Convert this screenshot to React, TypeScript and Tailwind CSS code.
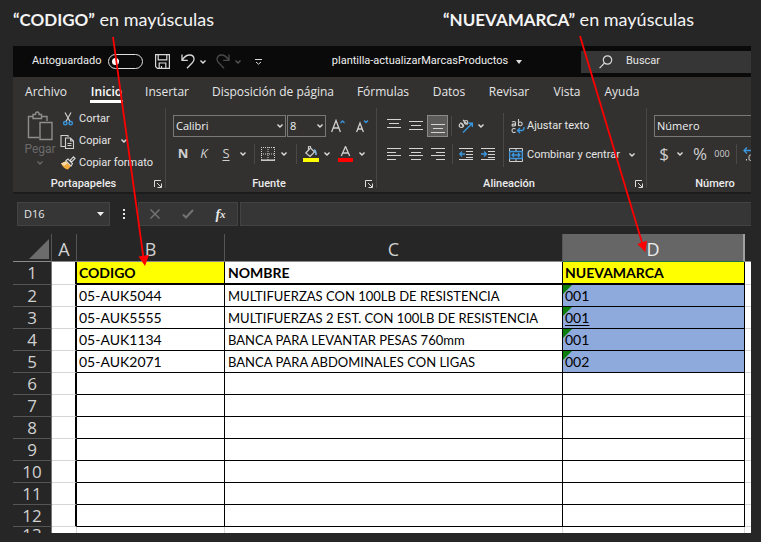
import type { ReactNode } from "react";

const UI = "font-['Open_Sans','Noto_Sans',sans-serif]";
const SMALL = "font-['Roboto','Open_Sans',sans-serif]";
const CELL = "font-['Lato','Liberation_Sans',sans-serif]";

function Chevron({ className = "text-[#e0e0e0]" }: { className?: string }) {
  return (
    <svg width="6" height="4" viewBox="0 0 6 4" fill="none" stroke="currentColor" strokeWidth="1.4" className={className}>
      <path d="M0.5 0.5 3 3l2.5-2.5" />
    </svg>
  );
}

function Tool({ label, className, children }: { label: string; className: string; children: ReactNode }) {
  return (
    <button type="button" aria-label={label} className={`flex h-[22px] shrink-0 items-center justify-center ${className}`}>
      {children}
    </button>
  );
}

function Divider({ className = "h-5 w-[10px]" }: { className?: string }) {
  return (
    <div className={`flex shrink-0 justify-center ${className}`}>
      <div className="w-px bg-[#4a4948]" />
    </div>
  );
}

function Group({ title, className, launcher = true, children }: { title: string; className: string; launcher?: boolean; children: ReactNode }) {
  return (
    <section aria-label={title} className={`flex h-[80px] shrink-0 flex-col border-r border-[#484746] ${className}`}>
      <div className="h-[72px] shrink-0">{children}</div>
      <div className="flex h-2 shrink-0 items-center">
        <div className={`flex-1 text-center text-[11px] font-medium leading-4 text-[#ececec] ${SMALL}`}>{title}</div>
        <button type="button" aria-label={`Opciones de ${title}`} className="flex w-[11px] justify-start">
          {launcher && (
            <svg width="8" height="8" viewBox="0 0 8 8" fill="none" stroke="#dcdcdc">
              <path d="M0.5 7V0.5H7M3 3l4 4M7.5 3.5v4h-4" />
            </svg>
          )}
        </button>
      </div>
    </section>
  );
}

function Lines({ rows }: { rows: [number, number, number][] }) {
  return (
    <svg width="14" height="14" viewBox="0 0 14 14" stroke="#d4d4d4" strokeWidth="1">
      {rows.map(([x, y, w]) => (
        <path key={y} d={`M${x} ${y + 0.5}h${w}`} />
      ))}
    </svg>
  );
}

function Indent({ right = false }: { right?: boolean }) {
  return (
    <svg width="14" height="14" viewBox="0 0 14 14" fill="none" stroke="#d4d4d4">
      <path d="M0 1.5h14M7 4.5h7M7 7.5h7M7 10.5h7M0 12.5h14" />
      <path stroke="#3a96dd" strokeWidth="1.3" d={right ? "M0 7h5M3 4.5 5.5 7 3 9.5" : "M1 7h5M3 4.5.8 7 3 9.5"} />
    </svg>
  );
}

function TitleBar() {
  return (
    <header className={`flex h-[31px] items-center bg-[#0a0a0a] pl-[19px] text-[11px] text-[#f0f0f0] ${SMALL}`}>
      <label htmlFor="autosave" className="w-[76px] shrink-0 whitespace-nowrap">Autoguardado</label>
      <input
        id="autosave"
        type="checkbox"
        role="switch"
        className="h-[15px] w-[35px] shrink-0 appearance-none rounded-full border border-[#e0e0e0] before:ml-[3px] before:mt-[3px] before:block before:size-[7px] before:rounded-full before:bg-white"
      />
      <Tool label="Guardar" className="ml-[10px] w-[18px]">
        <svg width="15" height="15" viewBox="0 0 15 15" fill="none" stroke="#d8d8d8" strokeWidth="1.2">
          <path d="M0.6 0.6h13.8v13.8H2.4L.6 12.6zM3.2.6v5.2h8.6V.6M4.2 14.4V9h6.6v5.4M6.5 12v2.4" />
        </svg>
      </Tool>
      <Tool label="Deshacer" className="ml-[8px] w-[18px]">
        <svg width="14" height="15" viewBox="0 0 14 15" fill="none" stroke="#d8d8d8" strokeWidth="1.3">
          <path d="M1 .5v5.8h5.8M1.3 6C3.2 2.800 5.800 1 8.700 1c2.600 0 4.300 1.900 4.300 4.200 0 1.500-.7 2.600-1.700 3.600L6 14.300" />
        </svg>
      </Tool>
      <Tool label="Opciones de deshacer" className="w-[12px]"><Chevron /></Tool>
      <Tool label="Rehacer" className="ml-[5px] w-[18px]">
        <svg width="14" height="15" viewBox="0 0 14 15" fill="none" stroke="#4a4a4a" strokeWidth="1.300">
          <path d="M13 .5v5.800H7.200M12.700 6C10.800 2.800 8.200 1 5.300 1 2.700 1 1 2.900 1 5.200c0 1.500.7 2.600 1.700 3.600L8 14.300" />
        </svg>
      </Tool>
      <Tool label="Opciones de rehacer" className="w-[12px]"><Chevron className="text-[#555]" /></Tool>
      <Tool label="Personalizar barra" className="ml-[7px] w-[14px]">
        <svg width="7" height="6" viewBox="0 0 7 6" fill="none" stroke="#d8d8d8"><path d="M0 .5h7M1 3l2.500 2.200L6 3" /></svg>
      </Tool>
      <div className="flex flex-1 justify-center pl-2">
        <button type="button" className="flex items-center gap-2 whitespace-nowrap">
          plantilla-actualizarMarcasProductos
          <svg width="6" height="4" viewBox="0 0 6 4" fill="#e0e0e0"><path d="M0 0h6L3 4z" /></svg>
        </button>
      </div>
      <label className="flex h-[22px] w-[170px] shrink-0 items-center gap-[13px] bg-[#363636] pl-[18px]">
        <svg width="14" height="14" viewBox="0 0 14 14" fill="none" stroke="#d8d8d8" strokeWidth="1.200">
          <circle cx="8.500" cy="5" r="4.200" /><path d="M5.500 8 .6 13.200" />
        </svg>
        <input aria-label="Buscar" placeholder="Buscar" className="w-24 bg-transparent placeholder:text-[#e6e6e6]" />
      </label>
    </header>
  );
}

const tabs = [
  { name: "Archivo", w: "w-[66px]" },
  { name: "Inicio", w: "w-[55px]" },
  { name: "Insertar", w: "w-[66px]" },
  { name: "Disposición de página", w: "w-[146px]" },
  { name: "Fórmulas", w: "w-[74px]" },
  { name: "Datos", w: "w-[58px]" },
  { name: "Revisar", w: "w-[62px]" },
  { name: "Vista", w: "w-[54px]" },
  { name: "Ayuda", w: "w-[56px]" },
];

function Tabs() {
  return (
    <nav className="flex h-[31px] text-[12px] leading-4 text-[#e6e6e6]">
      {tabs.map((t) => (
        <button key={t.name} type="button" className={`flex h-[26px] shrink-0 items-end justify-center whitespace-nowrap ${t.w}`}>
          <span className={t.name === "Inicio" ? "border-b-[3px] border-white px-px font-semibold text-white" : "pb-[3px]"}>{t.name}</span>
        </button>
      ))}
    </nav>
  );
}

function Clipboard() {
  return (
    <Group title="Portapapeles" className="w-[153px]">
      <div className={`flex ${SMALL}`}>
        <button type="button" className="ml-[10px] flex w-[34px] flex-col items-center pt-[3px] text-[12px] leading-4 text-[#6a6968]">
          <svg width="26" height="30" viewBox="0 0 26 30" fill="none" stroke="#8e8d8c" strokeWidth="1.400">
            <path d="M12 26.500H1.500v-21H6M14.500 5.500H20V10M6 7.500v-4h2.500C8.500 1.500 9 1 10.300 1s1.800.5 1.800 2.500h2.400v4z" />
            <path d="M13 11.500h12v17H13z" />
          </svg>
          Pegar
          <span className="flex pt-1"><Chevron className="text-[#6a6968]" /></span>
        </button>
        <div className="ml-[3px] flex flex-col text-[11px] text-[#e6e6e6]">
          <button type="button" className="flex h-[22px] items-center whitespace-nowrap">
            <svg width="19" height="14" viewBox="0 0 19 14" fill="none" stroke="#cfcfcf" strokeWidth="1.200">
              <path d="M5 .5l5 9M11 .5l-5 9" />
              <g stroke="#3a96dd" strokeWidth="1.400"><circle cx="5.300" cy="11.200" r="1.700" /><circle cx="10.700" cy="11.200" r="1.700" /></g>
            </svg>
            Cortar
          </button>
          <button type="button" className="flex h-[22px] items-center whitespace-nowrap">
            <svg width="19" height="15" viewBox="0 0 19 15" fill="none" stroke="#cfcfcf" strokeWidth="1.100">
              <path d="M5 12.500H1v-11h7V3M5.500 4h5l3 3v7.500h-8zM10.500 4v3h3M7.500 9.500h4M7.500 11.500h4" />
            </svg>
            Copiar
            <span className="pl-[10px]"><Chevron /></span>
          </button>
          <button type="button" className="flex h-[22px] items-center whitespace-nowrap">
            <svg width="19" height="14" viewBox="0 0 19 14" fill="none">
              <path d="M1 7.500 6 5l5 5-3 3.500C5 13 3 11.500 1 7.500z" fill="#f2a93b" />
              <path d="M1 7.500 5.500 5.500l2 2-3.500 2.200z" fill="#f7ddb0" />
              <path d="M6 4.500 8 3l4.500 4.500L11 10z" fill="#323130" stroke="#d8d8d8" strokeWidth="1.100" />
              <path d="m10 4.500 3.500-3.700 1.600 1.600L11.600 6z" stroke="#d8d8d8" strokeWidth="1.100" />
            </svg>
            Copiar formato
          </button>
        </div>
      </div>
    </Group>
  );
}

function Combo({ label, value, className }: { label: string; value: string; className: string }) {
  return (
    <div className={`flex h-[22px] shrink-0 items-center border border-[#797876] bg-[#323130] pr-[2px] ${className}`}>
      <select aria-label={label} className="min-w-0 flex-1 appearance-none bg-transparent pl-[2px] text-[11px] leading-5 text-[#f0f0f0]">
        <option>{value}</option>
      </select>
      <Chevron />
    </div>
  );
}

function FontGroup() {
  return (
    <Group title="Fuente" className="w-[211px] pl-[7px]">
      <div className="flex items-center pt-[7px]">
        <Combo label="Fuente" value="Calibri" className="mr-px w-[113px]" />
        <Combo label="Tamaño" value="8" className="w-[39px]" />
        <Tool label="Aumentar fuente" className="w-[24px]">
          <svg width="14" height="14" viewBox="0 0 14 14" fill="none" stroke="#cfcfcf" strokeWidth="1.300">
            <path d="M.6 13 5 1.500 9.400 13M2.200 9h5.600" /><path stroke="#3a96dd" d="m9.500 4 2-2 2 2" />
          </svg>
        </Tool>
        <Tool label="Reducir fuente" className="w-[23px]">
          <svg width="14" height="14" viewBox="0 0 14 14" fill="none" stroke="#cfcfcf" strokeWidth="1.300">
            <path d="M1.600 13 5 4l3.400 9M2.800 10h4.400" /><path stroke="#3a96dd" d="m9 1.500 2 2 2-2" />
          </svg>
        </Tool>
      </div>
      <div className="flex items-center pt-[6px] text-[13px] text-[#d0d0d0]">
        <Tool label="Negrita" className="w-[20px] font-bold">N</Tool>
        <Tool label="Cursiva" className="w-[22px] italic">K</Tool>
        <Tool label="Subrayado" className="w-[22px] underline underline-offset-2">S</Tool>
        <Tool label="Opciones de subrayado" className="w-[12px]"><Chevron /></Tool>
        <Divider />
        <Tool label="Bordes" className="w-[18px]">
          <svg width="14" height="14" viewBox="0 0 14 14" fill="none" stroke="#cfcfcf">
            <path strokeDasharray="1 1" d="M0 .5h14M.5 0v13M13.500 0v13M7 0v13M0 7h14" /><path strokeWidth="1.500" d="M0 13.200h14" />
          </svg>
        </Tool>
        <Tool label="Opciones de bordes" className="w-[14px]"><Chevron /></Tool>
        <Divider />
        <Tool label="Color de relleno" className="w-[20px]">
          <svg width="16" height="16" viewBox="0 0 16 16" fill="none" stroke="#cfcfcf" strokeWidth="1.200">
            <path d="M7 2.500 2.800 7 7 10.500 11.500 6 7.500 2V.5C7.500 0 5.500 0 5.500 1v3" />
            <path d="M11 4c1.500 0 2 1.500 2 5" stroke="#7db9e8" strokeWidth="1.600" /><path d="M0 12h16v4H0z" fill="#ffff00" stroke="none" />
          </svg>
        </Tool>
        <Tool label="Opciones de relleno" className="w-[12px]"><Chevron /></Tool>
        <Tool label="Color de fuente" className="w-[24px]">
          <svg width="15" height="16" viewBox="0 0 15 16" fill="none" stroke="#cfcfcf" strokeWidth="1.300">
            <path d="M3.300 10 7.500.5l4.200 9.500M4.800 7h5.400" /><path d="M0 12h15v4H0z" fill="#ff0000" stroke="none" />
          </svg>
        </Tool>
        <Tool label="Opciones de color" className="w-[10px]"><Chevron /></Tool>
      </div>
    </Group>
  );
}

function AlignGroup() {
  return (
    <Group title="Alineación" className="w-[270px] pl-[6px]">
      <div className="flex">
        <div className="w-[117px] shrink-0 pt-[7px]">
          <div className="flex items-center">
            <Tool label="Alinear arriba" className="w-[22px]"><Lines rows={[[0, 0, 14], [2, 4, 10], [0, 8, 14]]} /></Tool>
            <Tool label="Alinear al medio" className="w-[22px]"><Lines rows={[[0, 2, 14], [2, 6, 10], [0, 10, 14]]} /></Tool>
            <Tool label="Alinear abajo" className="w-[21px] border border-[#8a8988] bg-[#5c5b5a]"><Lines rows={[[0, 5, 14], [2, 9, 10], [0, 13, 14]]} /></Tool>
            <Divider className="h-5 w-[7px]" />
            <Tool label="Orientación" className="w-[22px]">
              <svg width="16" height="14" viewBox="0 0 16 14" fill="none" stroke="#cfcfcf" strokeWidth="1.200">
                <circle cx="3.200" cy="6.500" r="2" /><path d="M2.500 3.500 6 7.500M5 1l4.500 4.500" /><circle cx="8" cy="3.300" r="1.800" />
                <path stroke="#3a96dd" strokeWidth="1.400" d="m5 13.500 9-9M10.500 4.200h3.800V8" />
              </svg>
            </Tool>
            <Tool label="Opciones de orientación" className="w-[8px]"><Chevron /></Tool>
          </div>
          <div className="flex items-center pt-[6px]">
            <Tool label="Alinear a la izquierda" className="w-[22px]"><Lines rows={[[0, 1, 14], [0, 5, 9], [0, 8, 14], [0, 12, 9]]} /></Tool>
            <Tool label="Centrar" className="w-[22px]"><Lines rows={[[0, 1, 14], [2, 5, 10], [0, 8, 14], [2, 12, 10]]} /></Tool>
            <Tool label="Alinear a la derecha" className="w-[22px]"><Lines rows={[[0, 1, 14], [5, 5, 9], [0, 8, 14], [5, 12, 9]]} /></Tool>
            <Divider className="h-5 w-[6px]" />
            <Tool label="Disminuir sangría" className="w-[22px]"><Indent /></Tool>
            <Tool label="Aumentar sangría" className="w-[22px]"><Indent right /></Tool>
          </div>
        </div>
        <div className="flex pt-[5px]"><Divider className="h-[54px] w-[6px]" /></div>
        <div className={`flex flex-col pl-[3px] pt-[7px] text-[11px] text-[#e6e6e6] ${SMALL}`}>
          <button type="button" className="flex h-[22px] items-center whitespace-nowrap">
            <span className="flex w-[18px] justify-center">
              <svg width="14" height="15" viewBox="0 0 14 15" fill="none" stroke="#cfcfcf" strokeWidth="1.100">
                <path d="M1 3.200c1-1 3.500-1 3.500.6V7M4.500 5C2.500 5 1 5 1 6.200 1 7.500 4 7.300 4.500 6M7.500 0v7M7.500 4c.5-1.500 3.700-1.500 3.700.8s-3.200 2.500-3.700.8M4.500 10c-1.200-1-3.500-.6-3.500 1.500s2.300 2.500 3.500 1.500" />
                <path stroke="#3a96dd" strokeWidth="1.400" d="M13 8c.3 2.500-.8 3.500-3 3.500H6.500M9 9l-2.500 2.500L9 14" />
              </svg>
            </span>
            Ajustar texto
          </button>
          <button type="button" className="mt-[7px] flex h-[22px] items-center whitespace-nowrap">
            <span className="flex w-[18px] justify-start">
              <svg width="14" height="14" viewBox="0 0 14 14" fill="none" stroke="#cfcfcf">
                <path d="M.5.500h13v13H.5zM7 .5V3M7 11v2.500" /><path stroke="#3a96dd" strokeWidth="1.300" d="M.7 3.500h12.600v7H.7zM3 7h8M5 5 3 7l2 2M9 5l2 2-2 2" />
              </svg>
            </span>
            Combinar y centrar
            <span className="pl-[9px]"><Chevron /></span>
          </button>
        </div>
      </div>
    </Group>
  );
}

function NumberGroup() {
  return (
    <Group title="Número" className="w-[141px] pl-[7px]" launcher={false}>
      <div className="pt-[7px]"><Combo label="Formato de número" value="Número" className="w-[120px]" /></div>
      <div className="flex items-center pt-[6px] text-[#cfcfcf]">
        <Tool label="Formato de contabilidad" className="w-[20px] text-[17px]">$</Tool>
        <Tool label="Opciones de moneda" className="w-[12px]"><Chevron /></Tool>
        <Tool label="Porcentaje" className="w-[28px] text-[17px]">%</Tool>
        <Tool label="Millares" className="w-[16px] text-[9px]">000</Tool>
        <Divider className="h-5 w-[12px]" />
        <Tool label="Aumentar decimales" className="w-[18px]">
          <svg width="16" height="14" viewBox="0 0 16 14" fill="none" stroke="#cfcfcf">
            <path stroke="#3a96dd" strokeWidth="1.400" d="M1 3.500h8M4 .5l-3 3 3 3" /><path d="M3.500 12v1.500" /><rect x="6" y="8" width="3.500" height="5.500" rx="1.600" />
          </svg>
        </Tool>
      </div>
    </Group>
  );
}

function FormulaBar() {
  const box = "border border-[#434343] bg-[#363636]";
  return (
    <div className="flex h-[42px] items-center border-t-2 border-[#1c1c1c] bg-[#262626] pl-1 text-[#e6e6e6]">
      <div className={`flex h-6 w-[93px] shrink-0 items-center pl-[6px] pr-[5px] ${box}`}>
        <input aria-label="Cuadro de nombres" defaultValue="D16" className="w-16 min-w-0 flex-1 bg-transparent text-[11px]" />
        <button type="button" aria-label="Elegir nombre">
          <svg width="7" height="4" viewBox="0 0 7 4" fill="#f0f0f0"><path d="M0 0h7L3.500 4z" /></svg>
        </button>
      </div>
      <div className="flex w-7 shrink-0 justify-center">
        <svg width="2" height="10" viewBox="0 0 2 10" fill="#e6e6e6"><path d="M0 0h2v2H0zM0 4h2v2H0zM0 8h2v2H0z" /></svg>
      </div>
      <div className={`flex h-6 w-[100px] shrink-0 items-center ${box}`}>
        <Tool label="Cancelar" className="w-[32px]">
          <svg width="10" height="10" viewBox="0 0 10 10" stroke="#737373" strokeWidth="1.500"><path d="m.5.500 9 9M9.500.500l-9 9" /></svg>
        </Tool>
        <Tool label="Introducir" className="w-[33px]">
          <svg width="12" height="10" viewBox="0 0 12 10" fill="none" stroke="#737373" strokeWidth="2"><path d="m1 5.500 3 3L11 1" /></svg>
        </Tool>
        <Tool label="Insertar función" className="w-[33px] font-['Liberation_Serif',serif] text-[14px] font-bold italic">
          f<span className="text-[11px]">x</span>
        </Tool>
      </div>
      <input aria-label="Barra de fórmulas" className={`ml-[2px] h-6 min-w-0 flex-1 border-r-0 ${box}`} />
    </div>
  );
}

const rows = [
  ["05-AUK5044", "MULTIFUERZAS CON 100LB DE RESISTENCIA", "001"],
  ["05-AUK5555", "MULTIFUERZAS 2 EST. CON 100LB DE RESISTENCIA", "001"],
  ["05-AUK1134", "BANCA PARA LEVANTAR PESAS 760mm", "001"],
  ["05-AUK2071", "BANCA PARA ABDOMINALES CON LIGAS", "002"],
  ["", "", ""],
  ["", "", ""],
  ["", "", ""],
  ["", "", ""],
  ["", "", ""],
  ["", "", ""],
  ["", "", ""],
];

const rowHead = `border-b border-r border-b-[#555] border-r-[#777] bg-[#262626] text-[17px] font-normal leading-5 text-[#d0d0d0] ${UI}`;
const blank = "border-b border-[#d6d6d6]";
const columnA = "border-b border-r-2 border-b-[#d6d6d6] border-r-black";

function Sheet() {
  const colHead = "h-[28px] border-b border-r border-b-[#8a8a8a] border-r-[#555] pt-[2px]";
  return (
    <table className="w-full table-fixed border-separate border-spacing-0 bg-white text-left text-[14px] leading-5 text-black">
      <colgroup>
        <col className="w-[39px]" />
        <col className="w-[25px]" />
        <col className="w-[148px]" />
        <col className="w-[338px]" />
        <col />
        <col className="w-[6px]" />
      </colgroup>
      <thead className={`bg-[#262626] text-center text-[18px] text-[#d0d0d0] ${UI}`}>
        <tr>
          <td className={colHead}>
            <svg className="ml-auto mr-[2px]" width="20" height="20" viewBox="0 0 20 20" fill="#6c6c6c"><path d="M20 0v20H0z" /></svg>
          </td>
          <th scope="col" className={`font-normal ${colHead}`}>A</th>
          <th scope="col" className={`font-normal ${colHead}`}>B</th>
          <th scope="col" className={`font-normal ${colHead}`}>C</th>
          <th scope="col" className="h-[28px] border-b border-r-2 border-b-[#217346] border-r-[#a0a0a0] bg-[#666] pt-[2px] font-normal text-[#ececec]">D</th>
          <td className="border-b border-[#8a8a8a]" />
        </tr>
      </thead>
      <tbody className={CELL}>
        <tr className="h-[23px] font-bold">
          <th scope="row" className={`text-center ${rowHead}`}>1</th>
          <td className={columnA} />
          <td className="border-b-2 border-r border-black bg-[#ffff00] pl-[2px]">CODIGO</td>
          <td className="border-b-2 border-r border-black pl-[3px]">NOMBRE</td>
          <td className="border-b-2 border-r border-black bg-[#ffff00] pl-[2px]">NUEVAMARCA</td>
          <td className={blank} />
        </tr>
        {rows.map(([code, name, brand], i) => (
          <tr key={i} className="h-[22px]">
            <th scope="row" className={`text-center ${rowHead}`}>{i + 2}</th>
            <td className={columnA} />
            <td className="border-b border-r border-black pl-[2px]">{code}</td>
            <td className="whitespace-nowrap border-b border-r border-black pl-[3px] text-[13px]">{name}</td>
            <td className={`relative border-b border-r border-black pl-[2px] ${brand ? "bg-[#8ea9db]" : ""}`}>
              {brand && (
                <svg className="absolute left-0 top-0" width="9" height="9" viewBox="0 0 9 9" fill="#0b7d0b"><path d="M0 0h9L0 9z" /></svg>
              )}
              <span className={i === 1 ? "relative underline underline-offset-2" : "relative"}>{brand}</span>
            </td>
            <td className={blank} />
          </tr>
        ))}
        <tr className="h-[6px]">
          <th scope="row" className="border-r border-[#777] bg-[#262626] text-center text-[17px] font-normal text-[#d0d0d0]">
            <div className={`h-[6px] overflow-hidden leading-4 ${UI}`}>13</div>
          </th>
          <td className="border-r border-[#d6d6d6]" />
          <td className="border-r border-[#d6d6d6]" />
          <td className="border-r border-[#d6d6d6]" />
          <td className="border-r border-[#d6d6d6]" />
          <td />
        </tr>
      </tbody>
    </table>
  );
}

export default function App() {
  return (
    <main className={`relative min-h-screen overflow-hidden bg-[#262626] pb-[9px] ${UI}`}>
      <div className={`flex h-[46px] text-[18px] leading-6 text-[#f4f4f4] ${CELL}`}>
        <p className="w-[443px] shrink-0 pl-[13px] pt-[7px]"><b className="text-[17px]">“CODIGO”</b> en mayúsculas</p>
        <p className="whitespace-nowrap pt-[7px]"><b className="text-[17px]">“NUEVAMARCA”</b> en mayúsculas</p>
      </div>
      <div className="ml-[13px] mr-[10px] overflow-hidden bg-[#323130]">
        <TitleBar />
        <Tabs />
        <div className="flex h-[84px] overflow-hidden">
          <Clipboard />
          <FontGroup />
          <AlignGroup />
          <NumberGroup />
        </div>
        <FormulaBar />
        <Sheet />
      </div>
      <svg className="pointer-events-none absolute left-0 top-0" width="761" height="300" viewBox="0 0 761 300" fill="#ff0000" stroke="#ff0000">
        <path strokeWidth="1.800" d="M113 37 143.500 258M580 36l62.500 208" />
        <path stroke="none" d="m138.500 256.500 10.500-1.500-4 11zM637.300 244l9.700-3.200-1.700 11.200z" />
      </svg>
    </main>
  );
}
